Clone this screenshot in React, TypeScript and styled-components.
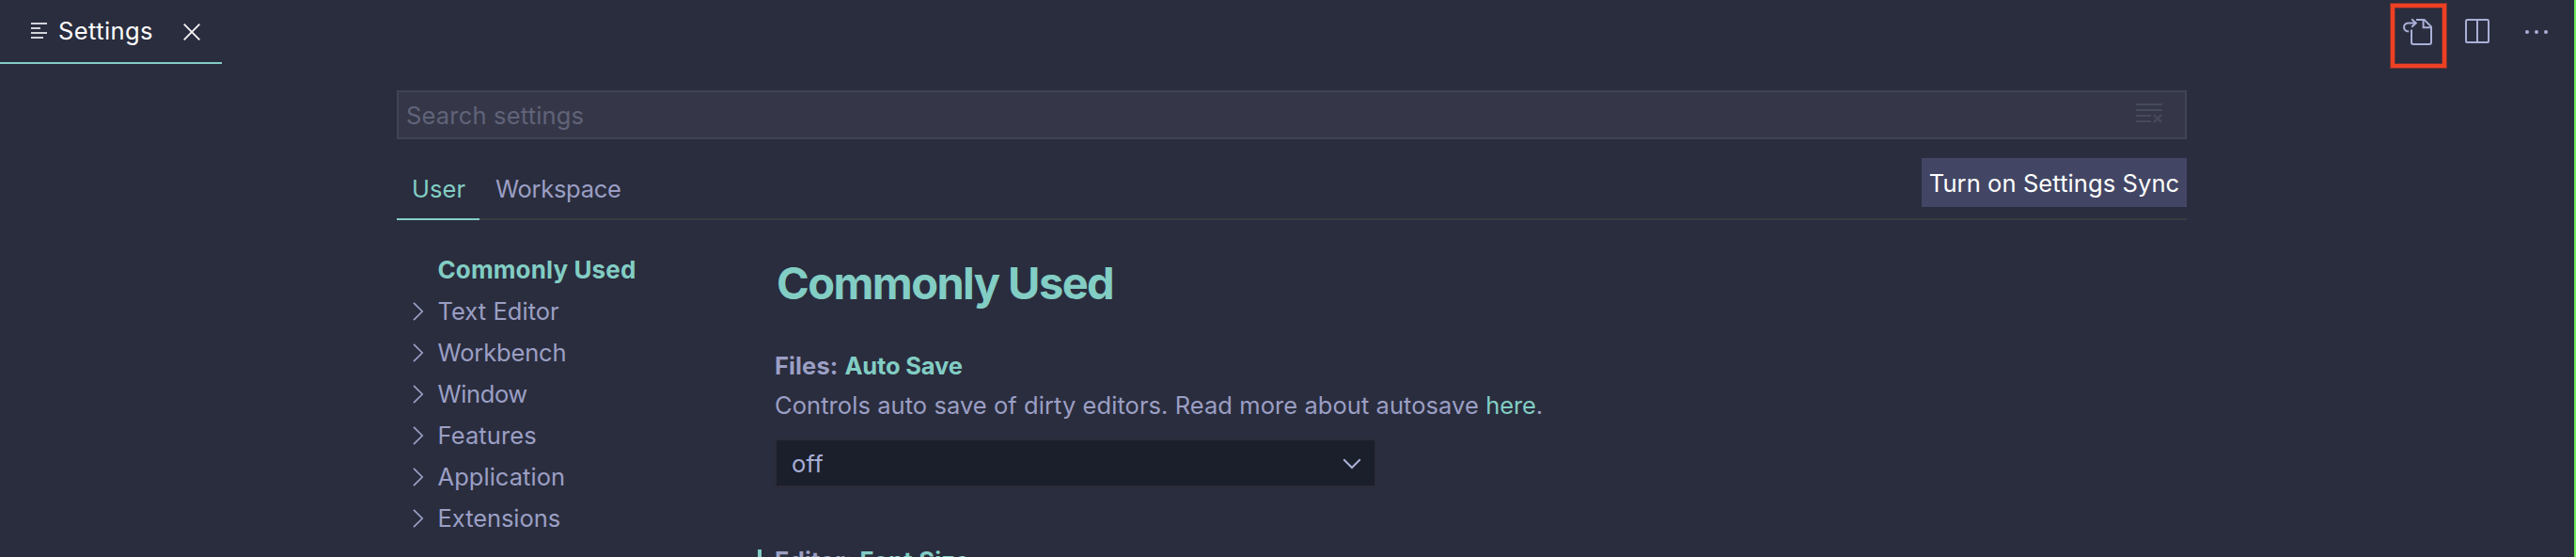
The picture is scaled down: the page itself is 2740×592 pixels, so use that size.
import React from "react";
import styled, { createGlobalStyle } from "styled-components";

const color = {
  bg: "#2a2d3e",
  text: "#9b9fc4",
  bright: "#a9afd6",
  accent: "#82cdc4",
  input: "#353748",
  inputBorder: "#404354",
  placeholder: "#606379",
  button: "#424664",
  select: "#1b1f2b",
  rule: "#3a3b40",
};

const GlobalStyle = createGlobalStyle`
  * { box-sizing: border-box; }
  body {
    margin: 0;
    background: ${color.bg};
    font-family: Inter, "Liberation Sans", sans-serif;
    font-size: 25.5px;
    line-height: 32px;
    color: ${color.text};
  }
`;

const Window = styled.div`
  width: 2740px;
  height: 592px;
  overflow: hidden;
  border-right: 2px solid #72e85a;
  background: ${color.bg};
`;

const Text = styled.span<{ $track?: number }>`
  letter-spacing: ${(p) => p.$track ?? 0}px;
  white-space: pre;
`;

const TitleBar = styled.header`
  display: flex;
  justify-content: space-between;
  height: 96px;
`;

const EditorTab = styled.div`
  display: flex;
  align-items: center;
  width: 236px;
  height: 68px;
  padding: 0 23px 0 33px;
  border-bottom: 2px solid ${color.accent};
  color: #fff;
`;

const ListIcon = styled.svg`
  margin-right: 12px;
`;

const CloseIcon = styled.svg`
  width: 18px;
  height: 18px;
  flex: none;
  margin: 2px 0 0 auto;
`;

const Actions = styled.div`
  display: flex;
  align-items: flex-start;
  padding: 3px 28px 0 0;
`;

const Highlight = styled.div`
  width: 61px;
  height: 70px;
  padding: 11px 0 0 9px;
  border: 5px solid #ee4023;
  outline: 1px solid #7c3530;
  outline-offset: -1px;
  box-shadow: inset 0 0 0 1px #6b3234;
  svg { display: block; }
`;

const SplitIcon = styled.svg`
  margin: 17px 0 0 19px;
`;

const MoreIcon = styled.svg`
  margin: 28px 0 0 38px;
`;

const Settings = styled.main`
  width: 1904px;
  margin-left: 422px;
`;

const SearchBox = styled.div`
  display: flex;
  align-items: center;
  justify-content: space-between;
  height: 52px;
  padding: 2px 24px 0 8px;
  border: 2px solid ${color.inputBorder};
  background: ${color.input};
  color: ${color.placeholder};
  svg { margin-top: -5px; }
`;

const ScopeBar = styled.nav`
  display: flex;
  height: 66px;
  margin-top: 20px;
  border-bottom: 2px solid ${color.rule};
`;

const Scope = styled.div<{ $active?: boolean }>`
  display: flex;
  align-items: center;
  height: 66px;
  padding: 2px 15px 0 16px;
  border-bottom: 2px solid ${(p) => (p.$active ? color.accent : "transparent")};
  color: ${(p) => (p.$active ? color.accent : color.text)};
  ${(p) => p.$active && "width: 88px; margin-right: 1px;"}
`;

const SyncButton = styled.button`
  display: flex;
  align-items: center;
  justify-content: center;
  width: 282px;
  height: 52px;
  margin-left: auto;
  padding: 2px 0 0;
  border: 0;
  background: ${color.button};
  color: #fff;
  font: inherit;
`;

const Body = styled.div`
  display: flex;
`;

const Tree = styled.ul`
  width: 384px;
  margin: 31px 0 0;
  padding: 0 0 0 17px;
  list-style: none;
`;

const TreeRow = styled.li<{ $selected?: boolean }>`
  display: flex;
  align-items: center;
  height: 44px;
  color: ${(p) => (p.$selected ? color.accent : color.text)};
  ${(p) => p.$selected && "font-size: 26px; font-weight: 700;"}
`;

const Twistie = styled.span`
  display: flex;
  width: 26.5px;
  flex: none;
`;

const Detail = styled.section`
  padding-top: 42px;
`;

const Heading = styled.h2`
  margin: 0 0 40px;
  padding-left: 20px;
  font-size: 47px;
  font-weight: 700;
  line-height: 50px;
  color: ${color.accent};
`;

const Setting = styled.article<{ $modified?: boolean }>`
  padding-left: ${(p) => (p.$modified ? 14 : 18)}px;
  ${(p) => p.$modified && `margin-top: 68px; border-left: 4px solid ${color.accent};`}
`;

const SettingName = styled.div<{ $height: number }>`
  height: ${(p) => p.$height}px;
  line-height: ${(p) => p.$height}px;
  font-weight: 700;
`;

const Key = styled(Text)`
  color: ${color.accent};
  margin-left: 7px;
`;

const Description = styled.div`
  height: 38px;
  line-height: 38px;
`;

const Link = styled(Text)`
  color: ${color.accent};
`;

const Select = styled.div`
  display: flex;
  align-items: center;
  justify-content: space-between;
  width: 636px;
  height: 48px;
  margin: 18px 0 0 2px;
  padding: 2px 14px 0 16px;
  background: ${color.select};
  box-shadow: 0 0 0 2px #2a2b38;
  color: ${color.bright};
`;

const sections: [string, number][] = [
  ["Text Editor", 0.04],
  ["Workbench", -0.15],
  ["Window", -0.4],
  ["Features", 0.12],
  ["Application", 0.04],
  ["Extensions", -0.06],
];

export default function App() {
  return (
    <>
      <GlobalStyle />
      <Window>
        <TitleBar>
          <EditorTab>
            <ListIcon width="17" height="18" viewBox="0 0 17 18" fill="#d3d3da">
              <path d="M0 0h17v2H0zM0 5h10v2H0zM0 10h17v2H0zM0 15h13v2H0z" />
            </ListIcon>
            <Text $track={0.42}>Settings</Text>
            <CloseIcon viewBox="0 0 18 18" stroke="#f3f3f5" strokeWidth="1.9">
              <path d="M.7.7l16.6 16.6M17.3.7L.7 17.3" />
            </CloseIcon>
          </EditorTab>
          <Actions>
            <Highlight>
              <svg width="32" height="30" viewBox="0 0 32 30" fill="none" stroke={color.bright} strokeWidth="2">
                <path d="M6.2 14.6C3.4 14.2 1 12.4 1 10c0-3 2.4-4.5 5-4.5h7.6M9.2 1.2l4.6 4.3-4.6 4.3" />
                <path d="M14 2h8.6L30 9.4V26q0 2-2 2H11q-2 0-2-2V12.6" />
                <path d="M21.6 2v8.2H30" />
              </svg>
            </Highlight>
            <SplitIcon width="26" height="26" viewBox="0 0 26 26" fill="none" stroke={color.bright} strokeWidth="2">
              <rect x="1" y="1" width="24" height="24" rx="1.6" />
              <path d="M13 1v24" />
            </SplitIcon>
            <MoreIcon width="24" height="6" viewBox="0 0 24 6" fill={color.bright}>
              <circle cx="2" cy="3" r="2" />
              <circle cx="12" cy="3" r="2" />
              <circle cx="22" cy="3" r="2" />
            </MoreIcon>
          </Actions>
        </TitleBar>
        <Settings>
          <SearchBox>
            <Text $track={0.18}>Search settings</Text>
            <svg width="28" height="21" viewBox="0 0 28 21" fill="#474a5c">
              <path d="M0 0h28v2H0zM0 6h28v2H0zM0 12h16v2H0zM0 18h16v2H0z" />
              <path d="M19 12l8 8M27 12l-8 8" stroke="#474a5c" strokeWidth="2.2" />
            </svg>
          </SearchBox>
          <ScopeBar>
            <Scope $active>
              <Text $track={0.08}>User</Text>
            </Scope>
            <Scope>
              <Text $track={-0.3}>Workspace</Text>
            </Scope>
            <SyncButton>
              <Text $track={0.09}>Turn on Settings Sync</Text>
            </SyncButton>
          </ScopeBar>
          <Body>
            <Tree>
              <TreeRow $selected>
                <Twistie />
                <Text $track={0.12}>Commonly Used</Text>
              </TreeRow>
              {sections.map(([name, track]) => (
                <TreeRow key={name}>
                  <Twistie>
                    <svg width="12" height="20" viewBox="0 0 12 20" fill="none" stroke={color.text} strokeWidth="1.7">
                      <path d="M1 .8l9.2 9.2L1 19.2" />
                    </svg>
                  </Twistie>
                  <Text $track={track}>{name}</Text>
                </TreeRow>
              ))}
            </Tree>
            <Detail>
              <Heading>
                <Text $track={-1.56}>Commonly Used</Text>
              </Heading>
              <Setting>
                <SettingName $height={46}>
                  <Text $track={0.1}>Files:</Text>
                  <Key $track={-0.15}>Auto Save</Key>
                </SettingName>
                <Description>
                  <Text $track={0.06}>Controls auto save of dirty editors. Read more about autosave </Text>
                  <Link $track={-0.1}>here</Link>
                  <Text>.</Text>
                </Description>
                <Select>
                  <Text $track={0.2}>off</Text>
                  <svg width="20" height="12" viewBox="0 0 20 12" fill="none" stroke={color.bright} strokeWidth="2">
                    <path d="M1.2 1.2L10 10l8.8-8.8" />
                  </svg>
                </Select>
              </Setting>
              <Setting $modified>
                <SettingName $height={24}>
                  <Text $track={0.2}>Editor:</Text>
                  <Key $track={0.3}>Font Size</Key>
                </SettingName>
              </Setting>
            </Detail>
          </Body>
        </Settings>
      </Window>
    </>
  );
}
